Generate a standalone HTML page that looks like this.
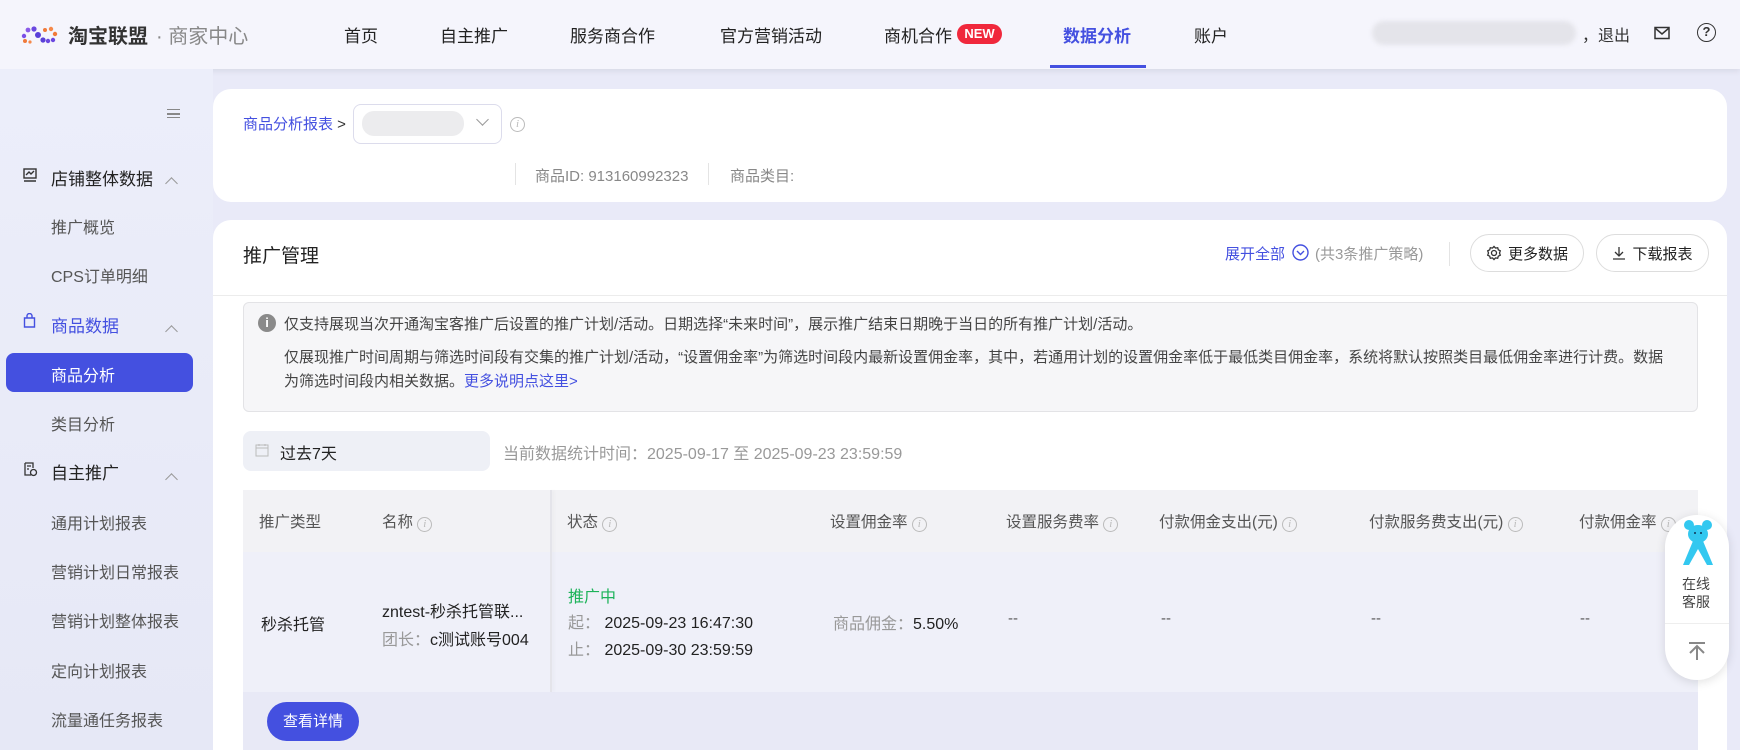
<!DOCTYPE html>
<html style="height:750px;overflow:hidden"><head><meta charset="utf-8"><style>
*{margin:0;padding:0;box-sizing:border-box}
body{width:1740px;height:750px;overflow:hidden;background:#e9eaf8;font-family:"Liberation Sans","Noto Sans CJK SC",sans-serif;color:#333;position:relative;font-size:15px}
.a{position:absolute;white-space:nowrap}
.hdr{position:absolute;left:0;top:0;width:1740px;height:69px;background:#f5f5fc;box-shadow:0 2px 6px rgba(0,0,0,.08)}
.nav{font-size:17px;color:#222;top:22px}
.side{position:absolute;left:0;top:69px;width:213px;height:681px;background:linear-gradient(#eceefa,#e6e8f6)}
.si{font-size:16px;color:#555;left:51px}
.sh{font-size:17px;color:#222;left:51px}
.chev{width:9px;height:9px;border-left:1.5px solid #999;border-top:1.5px solid #999;transform:rotate(45deg)}
.card{position:absolute;background:#fff;border-radius:18px;overflow:hidden}
.info{display:inline-block;width:15px;height:15px;border:1px solid #bbb;border-radius:50%;color:#bbb;font-size:11px;font-style:italic;text-align:center;line-height:13px;font-family:"Liberation Serif",serif}
.th{top:510px;font-size:15.5px;color:#555}
.td{font-size:16px;color:#222}
.btn{border:1px solid #ddd;border-radius:19px;height:38px;font-size:15px;color:#222;display:flex;align-items:center;justify-content:center;gap:6px}
</style></head><body>
<div class="hdr">
 <svg class="a" style="left:21px;top:25px" width="40" height="20" viewBox="0 0 40 20">
  <circle cx="3" cy="11" r="2.2" fill="#7a4ee6"/><circle cx="7" cy="5" r="2.4" fill="#8a5ae8"/><circle cx="13" cy="4" r="2.6" fill="#6b48e0"/><circle cx="4" cy="16" r="2" fill="#f07a3a"/><circle cx="9" cy="17" r="1.6" fill="#f5894a"/><circle cx="17" cy="10" r="3" fill="#5a40d8"/><circle cx="22" cy="15" r="2.6" fill="#5a40d8"/><circle cx="27" cy="16" r="2.2" fill="#6b48e0"/><circle cx="24" cy="5" r="2" fill="#f07a3a"/><circle cx="30" cy="4" r="2.2" fill="#f5894a"/><circle cx="34" cy="9" r="2.2" fill="#f07a3a"/><circle cx="32" cy="15" r="2.2" fill="#6b48e0"/>
 </svg>
 <div class="a" style="left:68px;top:20px;font-size:20px;font-weight:bold;color:#333">淘宝联盟</div>
 <div class="a" style="left:156px;top:20px;font-size:20px;color:#888">· 商家中心</div>
 <div class="a nav" style="left:344px">首页</div>
 <div class="a nav" style="left:440px">自主推广</div>
 <div class="a nav" style="left:570px">服务商合作</div>
 <div class="a nav" style="left:720px">官方营销活动</div>
 <div class="a nav" style="left:884px">商机合作</div>
 <div class="a" style="left:957px;top:24px;width:45px;height:20px;background:#f0283c;border-radius:10px;color:#fff;font-size:13px;font-weight:bold;text-align:center;line-height:20px">NEW</div>
 <div class="a nav" style="left:1063px;color:#4450e0;font-weight:bold">数据分析</div>
 <div class="a" style="left:1050px;top:65px;width:96px;height:3px;background:#4450e0"></div>
 <div class="a nav" style="left:1194px">账户</div>
 <div class="a" style="left:1372px;top:21px;width:204px;height:24px;background:#e4e4ea;border-radius:12px;filter:blur(2px)"></div>
 <div class="a" style="left:1582px;top:22px;font-size:16px;color:#333">，退出</div>
 <svg class="a" style="left:1654px;top:26px" width="16" height="14" viewBox="0 0 16 14"><rect x="1" y="1.5" width="14" height="11" fill="none" stroke="#333" stroke-width="1.5"/><path d="M1 2l7 6 7-6" fill="none" stroke="#333" stroke-width="1.5"/></svg>
 <div class="a" style="left:1697px;top:23px;width:19px;height:19px;border:1.5px solid #333;border-radius:50%;font-size:13px;text-align:center;line-height:16px;font-weight:bold">?</div>
</div>

<div class="side">
 <div class="a" style="left:167px;top:40px;width:13px;height:9px;border-top:1.5px solid #888;border-bottom:1.5px solid #888"></div>
 <div class="a" style="left:167px;top:44px;width:13px;height:1.5px;background:#888"></div>
 <svg class="a" style="left:23px;top:99px" width="14" height="14" viewBox="0 0 14 14"><rect x="1" y="1" width="12" height="9" fill="none" stroke="#333" stroke-width="1.4"/><path d="M3 7l3-3 2 2 3-3M1 13h12" fill="none" stroke="#333" stroke-width="1.4"/></svg>
 <div class="a sh" style="top:96px">店铺整体数据</div>
 <div class="a chev" style="left:167px;top:110px"></div>
 <div class="a si" style="top:145px">推广概览</div>
 <div class="a si" style="top:194px">CPS订单明细</div>
 <svg class="a" style="left:23px;top:244px" width="13" height="15" viewBox="0 0 13 15"><path d="M1.5 5h10v9h-10zM4 5V3a2.5 2.5 0 015 0v2" fill="none" stroke="#4450e0" stroke-width="1.4"/></svg>
 <div class="a sh" style="top:243px;color:#4450e0">商品数据</div>
 <div class="a chev" style="left:167px;top:258px"></div>
 <div class="a" style="left:6px;top:284px;width:187px;height:39px;background:#4450e0;border-radius:8px"></div>
 <div class="a si" style="top:293px;color:#fff">商品分析</div>
 <div class="a si" style="top:342px">类目分析</div>
 <svg class="a" style="left:22px;top:392px" width="16" height="16" viewBox="0 0 16 16"><path d="M3 2h8v5M3 2v12h6M5 5h4M5 8h2" fill="none" stroke="#333" stroke-width="1.3"/><circle cx="11.5" cy="11.5" r="3" fill="none" stroke="#333" stroke-width="1.3"/></svg>
 <div class="a sh" style="top:390px">自主推广</div>
 <div class="a chev" style="left:167px;top:406px"></div>
 <div class="a si" style="top:441px">通用计划报表</div>
 <div class="a si" style="top:490px">营销计划日常报表</div>
 <div class="a si" style="top:539px">营销计划整体报表</div>
 <div class="a si" style="top:589px">定向计划报表</div>
 <div class="a si" style="top:638px">流量通任务报表</div>
</div>

<div class="card" style="left:213px;top:89px;width:1514px;height:113px">
 <div class="a" style="left:30px;top:24px;font-size:15px;color:#4450e0">商品分析报表 <span style="color:#333">&gt;</span></div>
 <div class="a" style="left:140px;top:15px;width:149px;height:40px;border:1px solid #dcdcec;border-radius:8px"></div>
 <div class="a" style="left:149px;top:22px;width:102px;height:25px;background:#ececee;border-radius:12px"></div>
 <div class="a" style="left:265px;top:26px;width:9px;height:9px;border-right:1.3px solid #999;border-bottom:1.3px solid #999;transform:rotate(45deg)"></div>
 <span class="a info" style="left:297px;top:28px">i</span>
 <div class="a" style="left:302px;top:74px;width:1px;height:22px;background:#e4e4e4"></div>
 <div class="a" style="left:322px;top:76px;font-size:15px;color:#888">商品ID: 913160992323</div>
 <div class="a" style="left:495px;top:74px;width:1px;height:22px;background:#e4e4e4"></div>
 <div class="a" style="left:517px;top:76px;font-size:15px;color:#888">商品类目:</div>
</div>

<div class="card" style="left:213px;top:220px;width:1514px;height:530px;border-radius:18px 18px 0 0">
 <div class="a" style="left:30px;top:21px;font-size:19px;color:#222">推广管理</div>
 <div class="a" style="left:1012px;top:23px;font-size:15px;color:#4450e0">展开全部</div>
 <svg class="a" style="left:1079px;top:24px" width="17" height="17" viewBox="0 0 17 17"><circle cx="8.5" cy="8.5" r="7.5" fill="none" stroke="#4450e0" stroke-width="1.4"/><path d="M5 7l3.5 3.5L12 7" fill="none" stroke="#4450e0" stroke-width="1.4"/></svg>
 <div class="a" style="left:1102px;top:23px;font-size:15px;color:#999">(共3条推广策略)</div>
 <div class="a" style="left:1236px;top:22px;width:1px;height:24px;background:#e4e4e4"></div>
 <div class="a btn" style="left:1257px;top:14px;width:114px"><svg width="16" height="16" viewBox="0 0 16 16"><circle cx="8" cy="8" r="2.5" fill="none" stroke="#333" stroke-width="1.3"/><path d="M8 1.5l1.5 1.6 2.2-.4.6 2.1 2 1L13.5 8l.8 2.2-2 1-.6 2.1-2.2-.4L8 14.5l-1.5-1.6-2.2.4-.6-2.1-2-1L2.5 8l-.8-2.2 2-1 .6-2.1 2.2.4z" fill="none" stroke="#333" stroke-width="1.3"/></svg>更多数据</div>
 <div class="a btn" style="left:1383px;top:14px;width:113px"><svg width="14" height="14" viewBox="0 0 14 14"><path d="M7 1v9M3 6l4 4 4-4M1 13h12" fill="none" stroke="#333" stroke-width="1.3"/></svg>下载报表</div>
 <div class="a" style="left:0;top:75px;width:1514px;height:1px;background:#ececec"></div>
 <div class="a" style="left:30px;top:82px;width:1455px;height:110px;background:#f6f6f8;border:1px solid #e3e3e6;border-radius:6px"></div>
 <div class="a" style="left:45px;top:94px;width:18px;height:18px;background:#8a8a8a;border-radius:50%;color:#fff;font-size:13px;font-weight:bold;text-align:center;line-height:18px">i</div>
 <div class="a" style="left:71px;top:93px;font-size:15px;color:#444">仅支持展现当次开通淘宝客推广后设置的推广计划/活动。日期选择“未来时间”，展示推广结束日期晚于当日的所有推广计划/活动。</div>
 <div class="a" style="left:71px;top:126px;font-size:15px;color:#444">仅展现推广时间周期与筛选时间段有交集的推广计划/活动，“设置佣金率”为筛选时间段内最新设置佣金率，其中，若通用计划的设置佣金率低于最低类目佣金率，系统将默认按照类目最低佣金率进行计费。数据</div>
 <div class="a" style="left:71px;top:150px;font-size:15px;color:#444">为筛选时间段内相关数据。<span style="color:#4450e0">更多说明点这里&gt;</span></div>
 <div class="a" style="left:30px;top:211px;width:247px;height:40px;background:#eef0f6;border-radius:8px"></div>
 <svg class="a" style="left:42px;top:223px" width="14" height="14" viewBox="0 0 14 14"><rect x="1" y="2" width="12" height="11" fill="none" stroke="#bbb"/><path d="M1 5h12M4 1v2M10 1v2" stroke="#bbb"/></svg>
 <div class="a" style="left:67px;top:220px;font-size:16px;color:#222">过去7天</div>
 <div class="a" style="left:290px;top:220px;font-size:16px;color:#999">当前数据统计时间：2025-09-17 至 2025-09-23 23:59:59</div>
 <div class="a" style="left:30px;top:270px;width:1455px;height:62px;background:#f2f2f5"></div>
 <div class="a" style="left:30px;top:332px;width:1455px;height:140px;background:#eff0f9"></div>
 <div class="a" style="left:30px;top:472px;width:1455px;height:58px;background:#e8e9f6"></div>
 <div class="a" style="left:337px;top:270px;width:2px;height:202px;background:#e4e4ea;box-shadow:2px 0 3px rgba(0,0,0,.04)"></div>
</div>
<div class="a th" style="left:259px">推广类型</div>
<div class="a th" style="left:382px">名称 <span class="info">i</span></div>
<div class="a th" style="left:567px">状态 <span class="info">i</span></div>
<div class="a th" style="left:830px">设置佣金率 <span class="info">i</span></div>
<div class="a th" style="left:1006px">设置服务费率 <span class="info">i</span></div>
<div class="a th" style="left:1159px">付款佣金支出(元) <span class="info">i</span></div>
<div class="a th" style="left:1369px">付款服务费支出(元) <span class="info">i</span></div>
<div class="a th" style="left:1579px">付款佣金率 <span class="info">i</span></div>
<div class="a td" style="left:261px;top:611px">秒杀托管</div>
<div class="a td" style="left:382px;top:598px">zntest-秒杀托管联...</div>
<div class="a td" style="left:382px;top:626px"><span style="color:#999">团长：</span>c测试账号004</div>
<div class="a td" style="left:568px;top:583px;color:#1db35a">推广中</div>
<div class="a td" style="left:568px;top:609px"><span style="color:#999">起：&nbsp;</span>2025-09-23 16:47:30</div>
<div class="a td" style="left:568px;top:636px"><span style="color:#999">止：&nbsp;</span>2025-09-30 23:59:59</div>
<div class="a td" style="left:833px;top:610px"><span style="color:#999">商品佣金：</span>5.50%</div>
<div class="a" style="left:1008px;top:610px;color:#555">--</div>
<div class="a" style="left:1161px;top:610px;color:#555">--</div>
<div class="a" style="left:1371px;top:610px;color:#555">--</div>
<div class="a" style="left:1580px;top:610px;color:#555">--</div>
<div class="a" style="left:267px;top:702px;width:92px;height:39px;background:#4450e0;border-radius:20px;color:#fff;font-size:15px;text-align:center;line-height:39px">查看详情</div>

<div class="a" style="left:1665px;top:515px;width:64px;height:165px;background:#fff;border-radius:32px;box-shadow:0 2px 10px rgba(0,0,0,.12)">
 <svg class="a" style="left:16px;top:4px" width="34" height="48" viewBox="0 0 34 48"><circle cx="8" cy="6" r="5" fill="#33c8f0"/><circle cx="26" cy="6" r="5" fill="#33c8f0"/><ellipse cx="17" cy="15" rx="10" ry="9" fill="#33c8f0"/><path d="M12 22L2 46h6l9-16 9 16h6L22 22z" fill="#33c8f0"/><circle cx="14" cy="14" r="1" fill="#135"/><circle cx="20" cy="14" r="1" fill="#135"/></svg>
 <div class="a" style="left:17px;top:60px;font-size:14px;color:#444;line-height:18px;white-space:normal;width:30px">在线客服</div>
 <div class="a" style="left:0;top:108px;width:64px;height:1px;background:#eee"></div>
 <svg class="a" style="left:22px;top:126px" width="20" height="20" viewBox="0 0 20 20"><path d="M2 2h16M10 5v14M3 12l7-7 7 7" fill="none" stroke="#888" stroke-width="2"/></svg>
</div>
</body></html>
